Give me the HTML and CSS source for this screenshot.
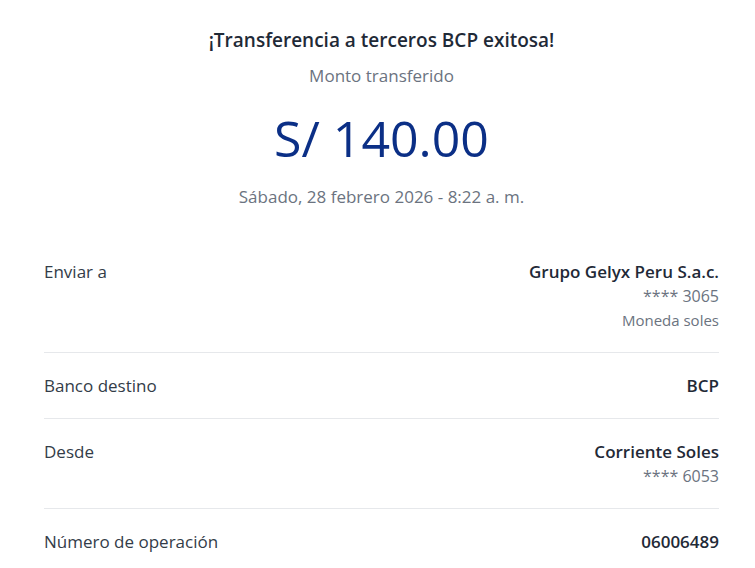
FILE: index.html
```html
<!DOCTYPE html>
<html lang="es">
<head>
<meta charset="utf-8">
<title>Transferencia exitosa</title>
<link rel="stylesheet" href="styles.css">
</head>
<body>
<main class="page">
  <section class="summary">
    <h1 class="title">¡Transferencia a terceros BCP exitosa!</h1>
    <p class="subtitle">Monto transferido</p>
    <p class="amount">S/ 140.00</p>
    <p class="date">Sábado, 28 febrero 2026 - 8:22 a. m.</p>
  </section>
  <section class="details">
    <div class="row">
      <div class="label">Enviar a</div>
      <div class="value">
        <div class="main">Grupo Gelyx Peru S.a.c.</div>
        <div class="sub">**** 3065</div>
        <div class="note">Moneda soles</div>
      </div>
    </div>
    <div class="row">
      <div class="label">Banco destino</div>
      <div class="value">
        <div class="main">BCP</div>
      </div>
    </div>
    <div class="row">
      <div class="label">Desde</div>
      <div class="value">
        <div class="main">Corriente Soles</div>
        <div class="sub">**** 6053</div>
      </div>
    </div>
    <div class="row">
      <div class="label">Número de operación</div>
      <div class="value">
        <div class="main">06006489</div>
      </div>
    </div>
  </section>
</main>
</body>
</html>
```
FILE: styles.css
```css
* { box-sizing: border-box; }
html, body { margin: 0; padding: 0; background: #ffffff; }
body {
  font-family: "Open Sans", "Noto Sans", sans-serif;
  color: #1f2a37;
}
.page {
  padding: 28px 36px 0 44px;
}
.summary {
  display: flex;
  flex-direction: column;
  align-items: center;
  text-align: center;
}
.title {
  margin: 0;
  font-size: 19px;
  line-height: 24px;
  font-weight: 600;
  color: #1f2a37;
}
.subtitle {
  margin: 12px 0 0;
  font-size: 17px;
  line-height: 24px;
  color: #6b7380;
}
.amount {
  margin: 18px 0 0;
  font-size: 50px;
  line-height: 64px;
  font-weight: 400;
  color: #0b2f86;
}
.date {
  margin: 15px 0 0;
  font-size: 17px;
  line-height: 24px;
  color: #6b7380;
}
.details {
  margin-top: 30px;
}
.row {
  display: flex;
  justify-content: space-between;
  align-items: flex-start;
  padding: 21px 0 20px;
  border-bottom: 1px solid #e6e8eb;
}
.row:last-child { border-bottom: none; }
.label {
  font-size: 17px;
  line-height: 24px;
  color: #333c48;
}
.value {
  text-align: right;
  font-size: 17px;
  line-height: 24px;
}
.main {
  font-weight: 600;
  color: #1f2a37;
}
.sub {
  font-size: 16px;
  color: #6b7380;
}
.note {
  font-size: 15px;
  color: #6b7380;
}
```
